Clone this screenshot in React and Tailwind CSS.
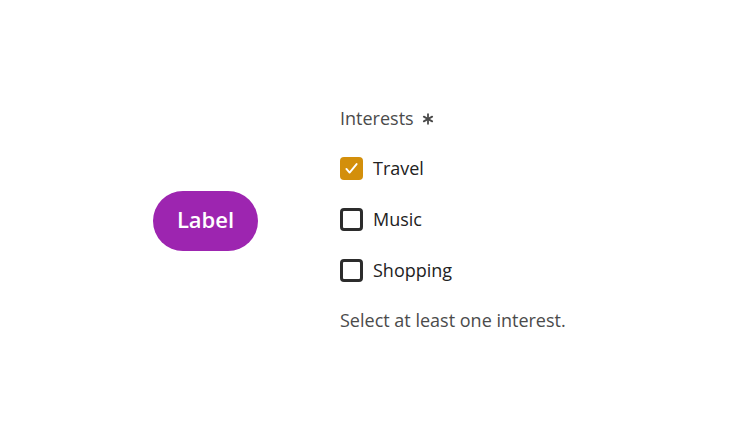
export default function App() {
  const font = { fontFamily: '"Open Sans", "Noto Sans", sans-serif' };
  const Box = ({ checked }) =>
    checked ? (
      <span className="flex h-[23px] w-[23px] items-center justify-center rounded-[4px] bg-[#d38f0b]">
        <svg width="17" height="17" viewBox="0 0 16 16" fill="none">
          <path d="M3.2 8.4l3 3.4L12.8 3.8" stroke="white" strokeWidth="1.8" strokeLinecap="round" strokeLinejoin="round" />
        </svg>
      </span>
    ) : (
      <span className="box-border h-[23px] w-[23px] rounded-[4px] border-[3px] border-[#2c2c2c] bg-white" />
    );
  return (
    <div className="flex h-[442px] w-[750px] items-center bg-white pl-[153px]" style={font}>
      <button className="flex h-[60px] w-[105px] items-center justify-center rounded-full bg-[#9d25b0] pb-[3px] text-[22px] font-semibold text-white">
        Label
      </button>
      <div className="mb-[4px] ml-[82px] flex flex-col">
        <div className="flex h-[24px] items-center gap-[8px] text-[18px] leading-[24px] text-[#4b4b4b]">
          <span>Interests</span>
          <svg width="12" height="12" viewBox="0 0 12 12" className="mt-[1px]">
            <g stroke="#4b4b4b" strokeWidth="1.8" strokeLinecap="round">
              <path d="M6 1.2v9.6" />
              <path d="M1.8 3.6l8.4 4.8" />
              <path d="M1.8 8.4l8.4-4.8" />
            </g>
          </svg>
        </div>
        <div className="mt-[27px] flex flex-col gap-[28px]">
          {[
            ['Travel', true],
            ['Music', false],
            ['Shopping', false],
          ].map(([t, c]) => (
            <label key={t} className="flex h-[23px] items-center gap-[10px] text-[18px] text-[#222]">
              <Box checked={c} />
              <span>{t}</span>
            </label>
          ))}
        </div>
        <div className="mt-[26px] text-[18px] leading-[24px] text-[#4b4b4b]">Select at least one interest.</div>
      </div>
    </div>
  );
}
